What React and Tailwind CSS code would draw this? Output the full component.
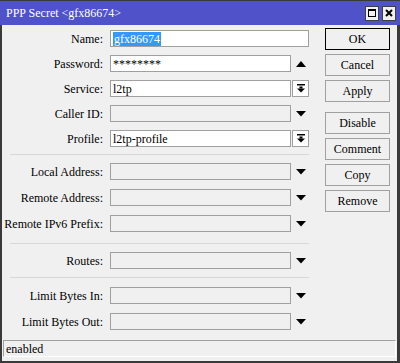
import React from "react";

function UpArrow() {
  return (
    <svg width="10" height="6" viewBox="0 0 10 6">
      <polygon points="0,6 10,6 5,0" fill="#000" />
    </svg>
  );
}

function DownArrow() {
  return (
    <svg width="10" height="6" viewBox="0 0 10 6">
      <polygon points="0,0 10,0 5,5.5" fill="#000" />
    </svg>
  );
}

function DropIcon() {
  return (
    <svg width="8" height="9" viewBox="0 0 8 9">
      <rect x="0" y="0" width="8" height="1.5" fill="#000" />
      <rect x="2.5" y="2.5" width="3" height="2" fill="#000" />
      <polygon points="0,4.5 8,4.5 4,8.5" fill="#000" />
    </svg>
  );
}

// one form row: label + field + optional widget
function Row({ label, value, selected, disabled, widget }) {
  return (
    <div className="flex items-center h-[17px]">
      <div className="w-[102px] text-right text-[12px] leading-none text-black pr-[1px]">{label}</div>
      <div className="ml-[6px] flex items-center">
        <div
          className={`h-[17px] border border-[#a0a0a0] flex items-center px-[2px] text-[12px] leading-none text-black ${
            widget ? "w-[181px]" : "w-[199px]"
          } ${disabled ? "bg-[#f0f0f0]" : "bg-white"}`}
        >
          {selected ? (
            <span className="bg-[#3399ff] text-white px-[1px] py-[1px]">{value}</span>
          ) : (
            <span>{value}</span>
          )}
        </div>
        {widget === "up" && (
          <div className="w-[18px] flex justify-center pl-[1px]">
            <UpArrow />
          </div>
        )}
        {widget === "down" && (
          <div className="w-[18px] flex justify-center pl-[2px]">
            <DownArrow />
          </div>
        )}
        {widget === "drop" && (
          <div className="ml-[1px] w-[17px] h-[17px] border border-[#a0a0a0] bg-white flex items-center justify-center">
            <DropIcon />
          </div>
        )}
      </div>
    </div>
  );
}

function Sep({ className }) {
  return <div className={`ml-[8px] w-[299px] h-[1px] bg-[#d8d8d8] ${className}`} />;
}

function Btn({ children, focused }) {
  return (
    <button
      className={`w-[65px] h-[22px] border text-[12px] leading-none text-black bg-[#f0f0f0] font-['Liberation_Serif',serif] ${
        focused ? "border-black" : "border-[#a0a0a0]"
      }`}
    >
      {children}
    </button>
  );
}

export default function App() {
  return (
    <div className="w-[400px] h-[363px] bg-[#f0f0f0] flex flex-col border-l-2 border-r-[3px] border-b-2 border-t border-[#3a3a3a] font-['Liberation_Serif',serif]">
      {/* Title bar */}
      <div className="h-[24px] bg-[#4f52c8] flex items-center pl-[4px] pr-[1px] -ml-[2px] -mr-[3px]">
        <span className="text-white text-[12px] leading-none ml-[2px]">PPP Secret &lt;gfx86674&gt;</span>
        <div className="ml-auto flex gap-[3px] mr-[3px]">
          <div className="w-[14px] h-[15px] bg-[#f0f0f0] border border-[#404040] flex items-center justify-center">
            <svg width="8" height="8" viewBox="0 0 8 8">
              <rect x="0.5" y="0.5" width="7" height="7" fill="none" stroke="#000" />
              <rect x="0" y="0" width="8" height="2" fill="#000" />
            </svg>
          </div>
          <div className="w-[14px] h-[15px] bg-[#f0f0f0] border border-[#404040] flex items-center justify-center">
            <svg width="8" height="8" viewBox="0 0 8 8">
              <path d="M1 1 L7 7 M7 1 L1 7" stroke="#000" strokeWidth="2" />
            </svg>
          </div>
        </div>
      </div>

      {/* Body */}
      <div className="flex flex-1">
        <div className="w-[307px] pt-[5px]">
          <div className="flex flex-col gap-[8px]">
            <Row label="Name:" value="gfx86674" selected />
            <Row label="Password:" value="********" widget="up" />
            <Row label="Service:" value="l2tp" widget="drop" />
            <Row label="Caller ID:" value="" disabled widget="down" />
            <Row label="Profile:" value="l2tp-profile" widget="drop" />
          </div>
          <Sep className="mt-[7px] mb-[8px]" />
          <div className="flex flex-col gap-[9px]">
            <Row label="Local Address:" value="" disabled widget="down" />
            <Row label="Remote Address:" value="" disabled widget="down" />
            <Row label="Remote IPv6 Prefix:" value="" disabled widget="down" />
          </div>
          <Sep className="mt-[11px] mb-[8px]" />
          <Row label="Routes:" value="" disabled widget="down" />
          <Sep className="mt-[8px] mb-[9px]" />
          <div className="flex flex-col gap-[9px]">
            <Row label="Limit Bytes In:" value="" disabled widget="down" />
            <Row label="Limit Bytes Out:" value="" disabled widget="down" />
          </div>
        </div>

        <div className="ml-[16px] pt-[3px] flex flex-col">
          <div className="flex flex-col gap-[4px]">
            <Btn focused>OK</Btn>
            <Btn>Cancel</Btn>
            <Btn>Apply</Btn>
          </div>
          <div className="flex flex-col gap-[4px] mt-[10px]">
            <Btn>Disable</Btn>
            <Btn>Comment</Btn>
            <Btn>Copy</Btn>
            <Btn>Remove</Btn>
          </div>
        </div>
      </div>

      {/* Status bar */}
      <div className="h-[17px] mx-[1px] mb-[4px] border-t border-l border-[#a0a0a0] border-r border-b border-r-white border-b-white flex items-center pl-[2px] text-[12px] leading-none text-black">
        enabled
      </div>
    </div>
  );
}
